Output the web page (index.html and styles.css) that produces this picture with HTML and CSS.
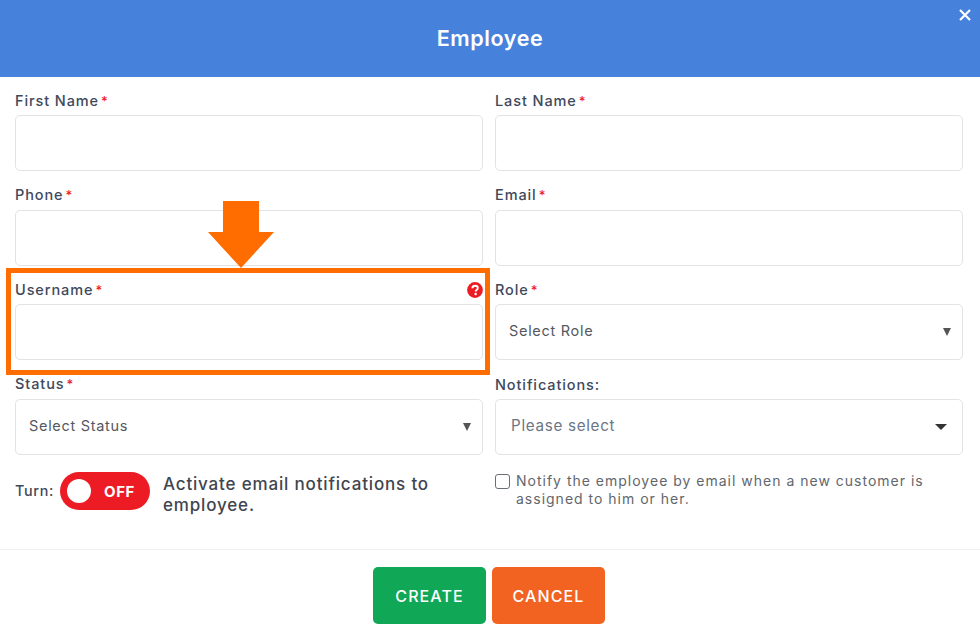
FILE: index.html
```html
<!DOCTYPE html>
<html lang="en">
<head>
<meta charset="utf-8">
<title>Employee</title>
<link rel="stylesheet" href="styles.css">
</head>
<body>
<div class="modal">
  <header class="head">
    <h1 class="title">Employee</h1>
    <button class="close" type="button" aria-label="Close">
      <svg width="14" height="14" viewBox="0 0 14 14"><path d="M2 2l10 10M12 2L2 12" stroke="#fff" stroke-width="2.2" fill="none"/></svg>
    </button>
  </header>
  <form class="form">
    <div class="field"><div class="label-row"><label class="label">First Name<span class="req">*</span></label></div><div class="input"></div></div>
    <div class="field"><div class="label-row"><label class="label">Last Name<span class="req">*</span></label></div><div class="input"></div></div>
    <div class="field"><div class="label-row"><label class="label">Phone<span class="req">*</span></label></div><div class="input"></div></div>
    <div class="field"><div class="label-row"><label class="label">Email<span class="req">*</span></label></div><div class="input"></div></div>
    <div class="field"><div class="label-row"><label class="label">Username<span class="req">*</span></label>
      <svg class="help" width="16" height="16" viewBox="0 0 16 16"><circle cx="8" cy="8" r="7.9" fill="#ed1c24"/><path d="M5.4 6.2C5.5 4.6 6.6 3.8 8.1 3.8c1.6 0 2.7.9 2.7 2.2 0 1.1-.6 1.6-1.3 2.1-.6.4-.8.7-.8 1.3" stroke="#fff" stroke-width="1.9" fill="none"/><circle cx="8.6" cy="12" r="1.25" fill="#fff"/></svg></div><div class="input"></div></div>
    <div class="field"><div class="label-row"><label class="label">Role<span class="req">*</span></label></div><div class="input select"><span class="select-text">Select Role</span><span class="caret-small"></span></div></div>
    <div class="field"><div class="label-row"><label class="label">Status<span class="req">*</span></label></div><div class="input select"><span class="select-text">Select Status</span><span class="caret-small"></span></div></div>
    <div class="field"><div class="label-row"><label class="label">Notifications:</label></div><div class="input select"><span class="placeholder">Please select</span><span class="caret-wide"></span></div></div>
    <div class="turn">
      <span class="turn-label">Turn:</span>
      <span class="toggle"><span class="knob"></span><span class="off">OFF</span></span>
      <span class="turn-text">Activate email notifications to employee.</span>
    </div>
    <div class="notify">
      <span class="check"></span>
      <span class="notify-text">Notify the employee by email when a new customer is assigned to him or her.</span>
    </div>
  </form>
  <footer class="foot">
    <button class="btn create" type="button">CREATE</button>
    <button class="btn cancel" type="button">CANCEL</button>
  </footer>
  <div class="highlight"></div>
  <svg class="arrow" width="66" height="67" viewBox="0 0 66 67"><path d="M15 0h36v31h15L33 67 0 31h15z" fill="#ff6d00"/></svg>
</div>
</body>
</html>
```
FILE: styles.css
```css
* { box-sizing: border-box; }
html, body { margin: 0; padding: 0; background: #fff; }
body { font-family: "Inter", "Liberation Sans", sans-serif; color: #3d4852; }
.modal { position: relative; width: 980px; height: 637px; overflow: hidden; }
.head { height: 77px; background: #4682dc; display: flex; align-items: center; justify-content: center; position: relative; }
.title { margin: 0; color: #fff; font-size: 21.5px; font-weight: 600; letter-spacing: 0.6px; padding-bottom: 1px; }
.close { position: absolute; top: 8px; right: 8px; padding: 0; border: 0; background: none; display: flex; }
.form { display: grid; grid-template-columns: 468px 468px; column-gap: 12px; padding: 15px 0 0 15px; }
.field { height: 94.67px; }
.label-row { height: 17px; margin-bottom: 6px; display: flex; justify-content: space-between; align-items: center; }
.label { font-size: 14.5px; font-weight: 500; color: #40495c; letter-spacing: 0.9px; line-height: 17px; }
.req { color: #ed1c24; margin-left: 2px; font-size: 13px; }
.help { display: block; }
.input { height: 56px; border: 1px solid #e2e3e5; border-radius: 5px; background: #fff; }
.select { display: flex; align-items: center; justify-content: space-between; padding: 0 11px 0 13px; }
.select-text { font-size: 14.5px; color: #55585e; letter-spacing: 0.7px; padding-bottom: 3px; }
.placeholder { font-size: 15.2px; color: #6b7588; letter-spacing: 0.7px; padding: 0 0 2px 2px; }
.caret-small { width: 0; height: 0; border-left: 4.5px solid transparent; border-right: 4.5px solid transparent; border-top: 8px solid #555; }
.caret-wide { width: 0; height: 0; border-left: 6.5px solid transparent; border-right: 6.5px solid transparent; border-top: 6px solid #333; margin-right: 4px; }
.turn { display: flex; align-items: center; height: 42px; }
.turn-label { font-size: 14.3px; font-weight: 500; color: #40495c; letter-spacing: 0.7px; width: 45px; margin-bottom: 3px; }
.toggle { width: 90px; height: 38px; border-radius: 19px; background: #ed1c24; display: flex; align-items: center; padding-left: 7px; flex: none; margin-bottom: 1px; }
.knob { width: 24px; height: 24px; border-radius: 50%; background: #fff; }
.off { color: #fff; font-size: 15px; font-weight: 700; margin-left: 13px; letter-spacing: 0.6px; }
.turn-text { width: 300px; margin-left: 13px; padding-top: 7px; font-size: 17px; font-weight: 500; line-height: 21px; color: #40454f; letter-spacing: 0.83px; }
.notify { display: flex; align-items: flex-start; padding-top: 1px; }
.check { width: 15px; height: 15px; border: 1.2px solid #6a6e75; border-radius: 3px; background: #fff; flex: none; margin-top: 2px; }
.notify-text { margin-left: 6px; font-size: 14px; line-height: 18px; color: #62666d; letter-spacing: 1px; width: 430px; }
.foot { position: absolute; left: 0; right: 0; top: 549px; height: 88px; border-top: 1px solid #eff0f1; display: flex; justify-content: center; gap: 6px; padding-top: 17px; padding-right: 2px; }
.btn { width: 113px; height: 57px; border: 0; border-radius: 5px; color: #fff; font-family: inherit; font-size: 16px; font-weight: 500; letter-spacing: 1.1px; }
.create { background: #10a857; }
.cancel { background: #f26322; }
.highlight { position: absolute; left: 6px; top: 268px; width: 484px; height: 107px; border: 5px solid #ff6d00; }
.arrow { position: absolute; left: 208px; top: 201px; }
```
